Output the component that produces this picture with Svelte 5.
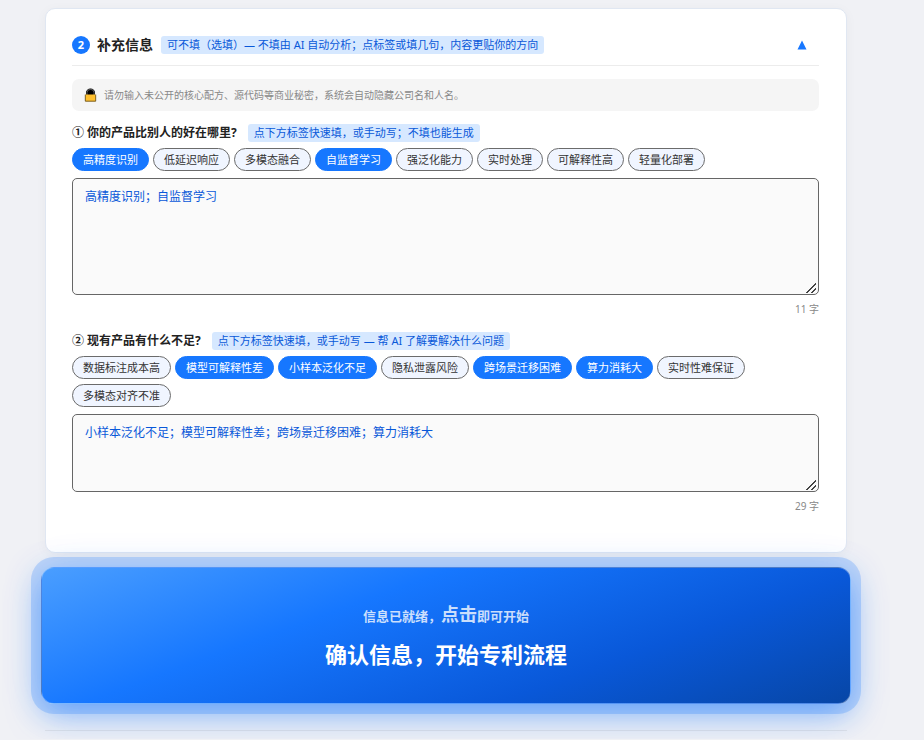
<script>
  const advantageTags = ['高精度识别', '低延迟响应', '多模态融合', '自监督学习', '强泛化能力', '实时处理', '可解释性高', '轻量化部署'];
  const weaknessTags = ['数据标注成本高', '模型可解释性差', '小样本泛化不足', '隐私泄露风险', '跨场景迁移困难', '算力消耗大', '实时性难保证', '多模态对齐不准'];

  let open = $state(true);
  let advantage = $state('高精度识别；自监督学习');
  let weakness = $state('小样本泛化不足；模型可解释性差；跨场景迁移困难；算力消耗大');

  const parts = (text) => text.split('；').filter(Boolean);

  // 点击标签：已有则移除，没有则追加
  const toggle = (text, tag) => {
    const list = parts(text);
    return (list.includes(tag) ? list.filter((t) => t !== tag) : [...list, tag]).join('；');
  };
</script>

<main class="page">
  <section class="card">
    <header class="card-head">
      <span class="step">2</span>
      <h2>补充信息</h2>
      <span class="hint">可不填（选填）— 不填由 AI 自动分析；点标签或填几句，内容更贴你的方向</span>
      <button class="collapse" aria-label="收起" aria-expanded={open} onclick={() => (open = !open)}>
        <svg class:closed={!open} width="10" height="10" viewBox="0 0 10 10"><path d="M5 0.5 9.5 9.5H0.5Z" fill="#1677ff" /></svg>
      </button>
    </header>

    {#if open}
      <p class="notice">
        <svg width="13" height="14" viewBox="0 0 13 14">
          <path d="M2 7V4.5a4.5 4 0 0 1 9 0V7Z" fill="#000" />
          <path d="M3 7V4.6a3.5 3.2 0 0 1 7 0V7" fill="none" stroke="#777" stroke-width="0.8" />
          <rect x="1" y="6.5" width="11" height="7" rx="1" fill="#ffc02e" />
          <path d="M1.3 6.5V13.2H11.7V6.5" fill="none" stroke="#5c4a22" stroke-width="0.8" />
        </svg>
        请勿输入未公开的核心配方、源代码等商业秘密，系统会自动隐藏公司名和人名。
      </p>

      <div class="field">
        <div class="question">
          <label for="advantage">① 你的产品比别人的好在哪里?</label>
          <span class="hint">点下方标签快速填，或手动写；不填也能生成</span>
        </div>
        <div class="tags">
          {#each advantageTags as tag}
            <button class="tag" class:active={parts(advantage).includes(tag)} onclick={() => (advantage = toggle(advantage, tag))}>{tag}</button>
          {/each}
        </div>
        <textarea id="advantage" class="tall" bind:value={advantage}></textarea>
        <div class="count">{advantage.length} 字</div>
      </div>

      <div class="field">
        <div class="question">
          <label for="weakness">② 现有产品有什么不足?</label>
          <span class="hint">点下方标签快速填，或手动写 — 帮 AI 了解要解决什么问题</span>
        </div>
        <div class="tags">
          {#each weaknessTags as tag}
            <button class="tag" class:active={parts(weakness).includes(tag)} onclick={() => (weakness = toggle(weakness, tag))}>{tag}</button>
          {/each}
        </div>
        <textarea id="weakness" bind:value={weakness}></textarea>
        <div class="count">{weakness.length} 字</div>
      </div>
    {/if}
  </section>

  <button class="submit">
    <span class="ready">信息已就绪，<strong>点击</strong>即可开始</span>
    <span class="action">确认信息，开始专利流程</span>
  </button>

  <hr />
</main>

<style>
  :global(body) {
    background: #f0f1f5;
  }

  .page,
  button,
  textarea {
    font-family: "Noto Sans", "Noto Sans CJK SC", sans-serif;
  }

  .page {
    padding: 8px 77px 8px 45px;
    color: #222;
  }

  .card {
    padding: 26px 27px 23px 26px;
    background: #fff;
    border: 1px solid #e0e7f2;
    border-radius: 10px;
    box-shadow: 0 2px 12px rgba(0, 0, 0, 0.04);
  }

  .card-head {
    display: flex;
    align-items: center;
    padding-bottom: 11px;
    border-bottom: 1px solid #ececec;
  }

  .step {
    width: 18px;
    height: 18px;
    margin-right: 7px;
    border-radius: 50%;
    background: #1677ff;
    color: #fff;
    font-size: 11px;
    font-weight: 700;
    line-height: 18px;
    text-align: center;
  }

  h2 {
    margin: 0 8px 0 0;
    font-size: 14px;
    font-weight: 700;
    line-height: 19px;
  }

  .hint {
    padding: 0 6px;
    border-radius: 3px;
    background: #d6e8ff;
    color: #0958d9;
    font-size: 11px;
    line-height: 18px;
  }

  .collapse {
    display: flex;
    margin-left: auto;
    padding: 4px 12px;
    border: 0;
    background: none;
    cursor: pointer;
  }

  .closed {
    transform: rotate(180deg);
  }

  .notice {
    display: flex;
    align-items: center;
    gap: 7px;
    margin: 13px 0;
    padding: 8px 12px;
    border-radius: 7px;
    background: #f5f5f5;
    color: #888;
    font-size: 10px;
    line-height: 16px;
  }

  .field {
    margin-bottom: 15px;
  }

  .question {
    display: flex;
    align-items: center;
    gap: 11px;
    margin-bottom: 6px;
  }

  label {
    font-size: 12px;
    font-weight: 700;
    line-height: 18px;
  }

  .tags {
    display: flex;
    flex-wrap: wrap;
    gap: 5px 4px;
    margin-bottom: 7px;
  }

  .tag {
    padding: 0 10px;
    border: 1px solid #6b6b6b;
    border-radius: 12px;
    background: #f0f5ff;
    color: #333;
    font-size: 11px;
    line-height: 21px;
    cursor: pointer;
  }

  .tag.active {
    border-color: #1677ff;
    background: #1677ff;
    color: #fff;
  }

  textarea {
    display: block;
    box-sizing: border-box;
    width: 100%;
    height: 78px;
    padding: 8px 12px;
    border: 1px solid #666;
    border-radius: 5px;
    background: #fafafa;
    color: #0958d9;
    font-size: 12px;
    line-height: 20px;
    resize: vertical;
  }

  textarea.tall {
    height: 117px;
  }

  textarea::-webkit-resizer {
    background: linear-gradient(135deg, transparent 48%, #444 48% 57%, transparent 57% 72%, #444 72% 81%, transparent 81%) 3px 4px / 10px 10px no-repeat;
  }

  .count {
    margin-top: 6px;
    color: #888;
    font-size: 10px;
    line-height: 16px;
    text-align: right;
  }

  .submit {
    display: flex;
    flex-direction: column;
    align-items: center;
    gap: 9px;
    width: calc(100% + 8px);
    margin: 14px -4px 26px;
    padding: 33px 24px;
    border: 1px solid rgba(255, 255, 255, 0.28);
    border-radius: 13px;
    background: linear-gradient(160deg, #4a9eff 0%, #1677ff 35%, #0958d9 70%, #0746a6 100%);
    box-shadow:
      0 0 0 10px rgba(22, 119, 255, 0.22),
      0 10px 32px rgba(22, 119, 255, 0.5),
      0 4px 48px rgba(22, 119, 255, 0.08);
    color: #fff;
    cursor: pointer;
  }

  .ready {
    color: rgba(255, 255, 255, 0.78);
    font-size: 13px;
    font-weight: 700;
    line-height: 26px;
  }

  .ready strong {
    font-size: 18px;
    font-weight: 700;
  }

  .action {
    font-size: 22px;
    font-weight: 700;
    line-height: 32px;
  }

  hr {
    margin: 0;
    border: 0;
    border-top: 1px solid rgba(0, 0, 0, 0.06);
  }
</style>
